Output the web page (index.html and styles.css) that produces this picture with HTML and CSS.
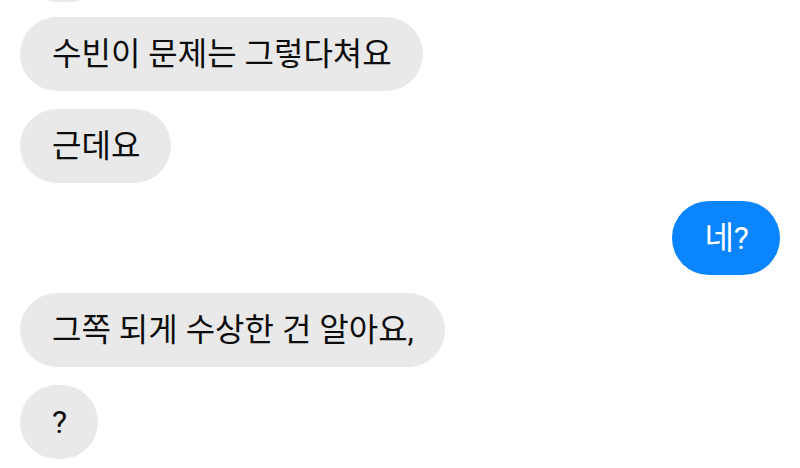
FILE: index.html
```html
<!DOCTYPE html>
<html lang="ko">
<head>
    <meta charset="UTF-8">
    <meta name="viewport" content="width=device-width, initial-scale=1.0">
    <title>대화</title>
    <link rel="stylesheet" href="styles.css">
</head>
<body>
    <div class="thread">
        <!-- earlier bubble, scrolled mostly out of view -->
        <div class="msg in earlier"></div>
        <div class="msg in">수빈이 문제는 그렇다쳐요</div>
        <div class="msg in">근데요</div>
        <div class="msg out">네?</div>
        <div class="msg in">그쪽 되게 수상한 건 알아요,</div>
        <div class="msg in">?</div>
    </div>
</body>
</html>
```

FILE: styles.css
```css
:root {
    --bubble-in: #e9e9e9;
    --bubble-out: #0a84ff;
    --text: #0d0d0d;
}

* {
    margin: 0;
    padding: 0;
    box-sizing: border-box;
}

body {
    font-family: Roboto, "Noto Sans CJK KR", sans-serif;
    background-color: #ffffff;
    color: var(--text);
    overflow: hidden;
}

.thread {
    display: flex;
    flex-direction: column;
    gap: 18px;
    padding: 0 20px;
    margin-top: -75px;
}

.msg {
    height: 74px;
    padding: 0 31px 0 32px;
    border-radius: 37px;
    display: flex;
    align-items: center;
    font-size: 32px;
    line-height: 1;
    white-space: nowrap;
}

.msg.in {
    align-self: flex-start;
    background-color: var(--bubble-in);
}

.msg.out {
    align-self: flex-end;
    background-color: var(--bubble-out);
    color: #ffffff;
}

.msg.earlier {
    width: 86px;
    height: 77px;
    margin-bottom: -3px;
}
```
